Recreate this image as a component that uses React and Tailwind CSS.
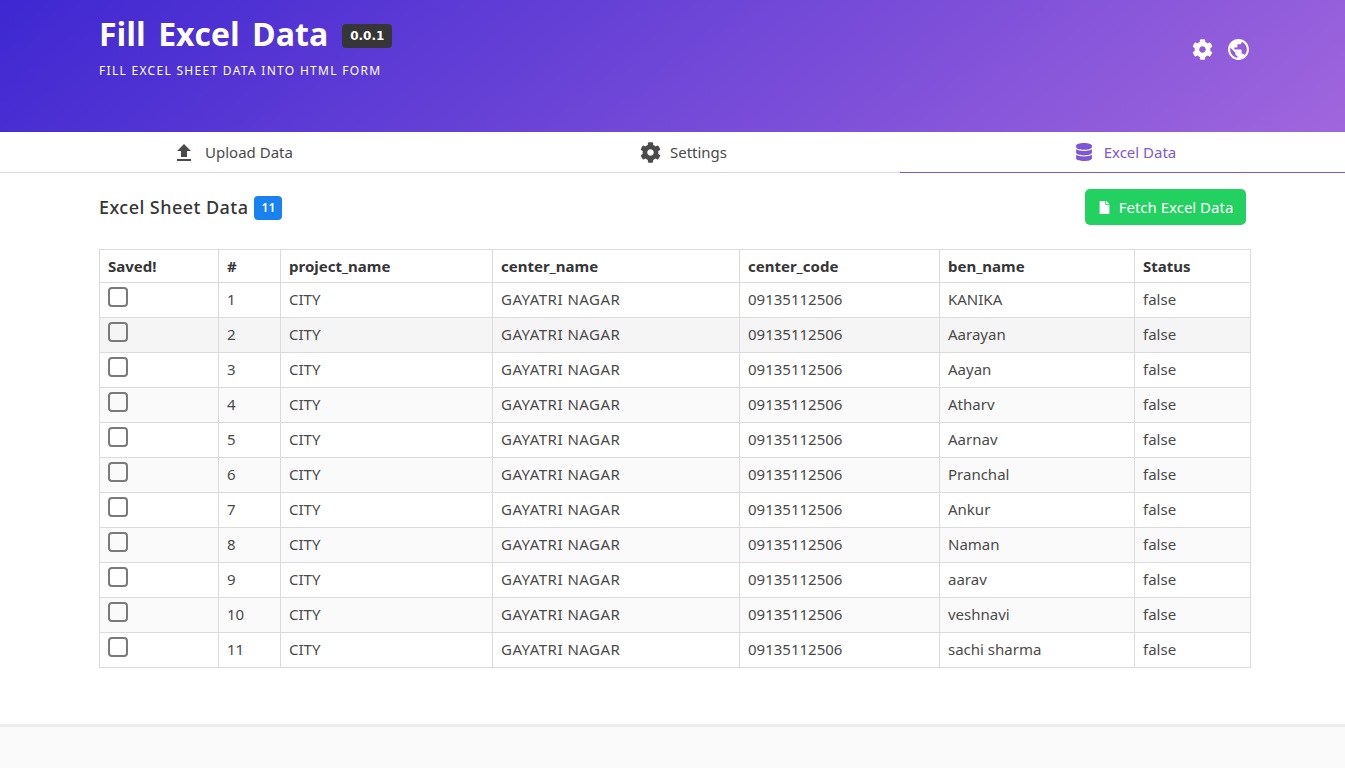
import React from "react";
import { FaCog, FaDatabase, FaFile } from "react-icons/fa";
import { MdFileUpload, MdPublic } from "react-icons/md";

const rows = [
  ["1", "KANIKA"],
  ["2", "Aarayan"],
  ["3", "Aayan"],
  ["4", "Atharv"],
  ["5", "Aarnav"],
  ["6", "Pranchal"],
  ["7", "Ankur"],
  ["8", "Naman"],
  ["9", "aarav"],
  ["10", "veshnavi"],
  ["11", "sachi sharma"],
];

const th = "border border-[#dbdbdb] px-2 py-1 text-left font-bold text-[#363636] h-[33px]";
const td = "border border-[#dbdbdb] px-2 pb-[2px] align-middle h-[35px]";

export default function App() {
  return (
    <div className="min-h-[768px] bg-white font-['Noto_Sans','Open_Sans',sans-serif] text-[15px] text-[#4a4a4a]">
      {/* Header */}
      <div className="h-[132px] bg-[linear-gradient(141deg,#3e27d1_0%,#a066dd_100%)] pl-[99px] pr-[94px] flex justify-between text-white">
        <div className="pt-[12px]">
          <div className="flex items-center gap-[14px] h-[46px]">
            <h1 className="font-['Comic_Sans_MS','Open_Sans',sans-serif] font-bold text-[32px] leading-none mb-[2px] [word-spacing:4px]">Fill Excel Data</h1>
            <span className="bg-[#363636] rounded w-[50px] h-[24px] mt-[2px] flex items-center justify-center font-['DejaVu_Sans',sans-serif] text-[12px] font-bold">0.0.1</span>
          </div>
          <p className="mt-[4px] text-[12px] tracking-[1.3px] uppercase">Fill Excel Sheet Data into HTML form</p>
        </div>
        <div className="flex items-start gap-[13px] pt-[37px]">
          <FaCog className="text-[21px] mt-[2px]" />
          <MdPublic className="text-[25px]" />
        </div>
      </div>

      {/* Tabs */}
      <div className="grid grid-cols-[469px_431px_445px] h-[41px] border-b border-[#dbdbdb]">
        <div className="flex items-center justify-center gap-[9px] h-[41px] pr-[4px]">
          <MdFileUpload className="text-[24px] text-[#4a4a4a]" />
          <span>Upload Data</span>
        </div>
        <div className="flex items-center justify-center gap-[9px] h-[41px] pr-[2px]">
          <FaCog className="text-[21px] text-[#4a4a4a]" />
          <span>Settings</span>
        </div>
        <div className="flex items-center justify-center gap-[11px] h-[41px] pl-[6px] border-b border-[#7e57d8] text-[#7e57d8]">
          <FaDatabase className="text-[18px]" />
          <span>Excel Data</span>
        </div>
      </div>

      {/* Content */}
      <div className="w-[1151px] ml-[99px]">
        <div className="flex items-start justify-between h-[76px] pt-[16px] pr-[4px]">
          <div className="flex items-center gap-[6px] h-[36px] pt-[1px]">
            <h2 className="text-[18px] font-medium tracking-[0.45px] text-[#363636]">Excel Sheet Data</h2>
            <span className="bg-[#1a82f0] text-white rounded text-[12px] font-semibold w-[28px] h-[24px] flex items-center justify-center">11</span>
          </div>
          <button className="bg-[#22d160] text-white rounded-[5px] h-[36px] w-[161px] flex items-center justify-center gap-[8px]">
            <FaFile className="text-[13px]" />
            <span>Fetch Excel Data</span>
          </button>
        </div>

        <table className="w-[1151px] border-collapse table-fixed">
          <colgroup>
            <col className="w-[119px]" />
            <col className="w-[62px]" />
            <col className="w-[212px]" />
            <col className="w-[247px]" />
            <col className="w-[200px]" />
            <col className="w-[195px]" />
            <col className="w-[116px]" />
          </colgroup>
          <thead>
            <tr>
              <th className={th}>Saved!</th>
              <th className={th}>#</th>
              <th className={th}>project_name</th>
              <th className={th}>center_name</th>
              <th className={th}>center_code</th>
              <th className={th}>ben_name</th>
              <th className={th}>Status</th>
            </tr>
          </thead>
          <tbody>
            {rows.map(([n, name], i) => (
              <tr key={n} className={i === 1 ? "bg-[#f5f5f5]" : i % 2 === 1 ? "bg-[#fafafa]" : ""}>
                <td className={td}>
                  <div className="w-[20px] h-[20px] rounded-[4px] border-2 border-[#7a7a7a] mb-[5px]" />
                </td>
                <td className={td}>{n}</td>
                <td className={td}>CITY</td>
                <td className={td + " tracking-[0.5px]"}>GAYATRI NAGAR</td>
                <td className={td}>09135112506</td>
                <td className={td}>{name}</td>
                <td className={td}>false</td>
              </tr>
            ))}
          </tbody>
        </table>
      </div>

      {/* Footer */}
      <div className="mt-[56px] h-[44px] bg-[#fafafa] border-t-[3px] border-[#ededed]" />
    </div>
  );
}
